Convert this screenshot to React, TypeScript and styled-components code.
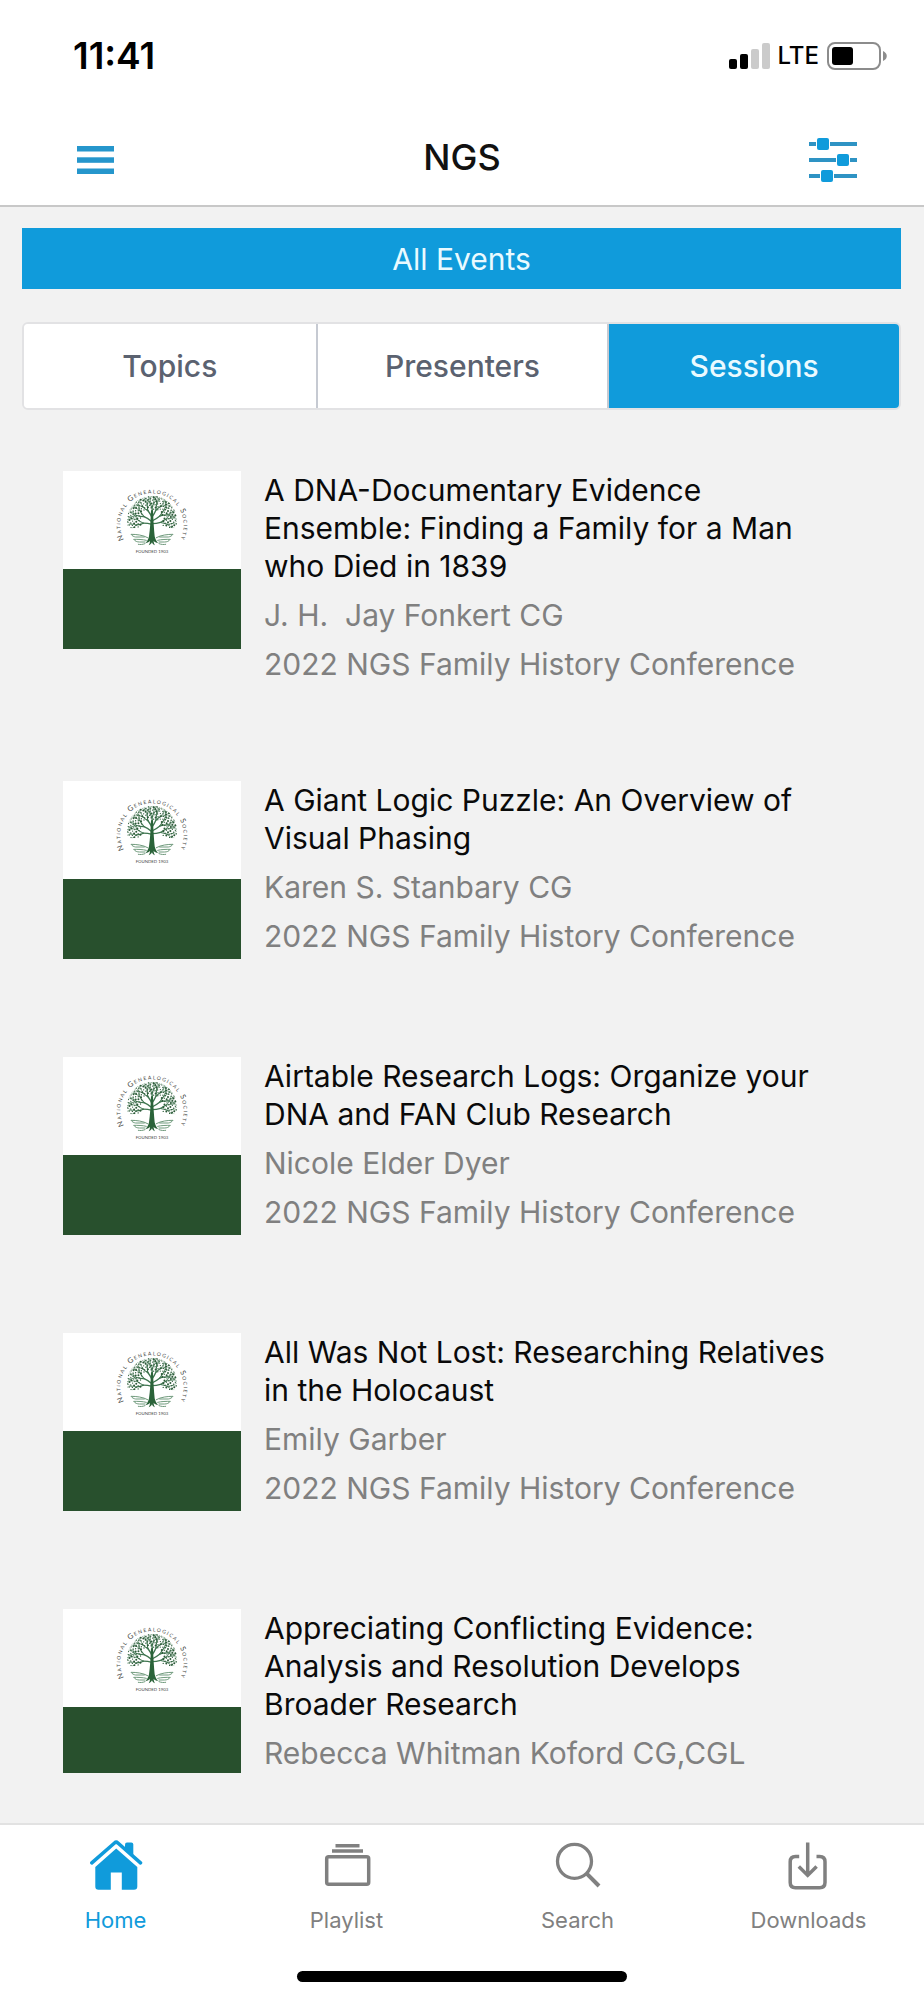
import React from 'react';
import styled, { createGlobalStyle } from 'styled-components';

const BLUE = '#109bdb';
const GREEN = '#28502d';
const GREY = '#808080';

const GlobalStyle = createGlobalStyle`
  *, *::before, *::after { box-sizing: border-box; }
  body {
    margin: 0;
    font-family: Inter, 'Liberation Sans', sans-serif;
    background: #f2f2f2;
  }
  button { font: inherit; border: 0; padding: 0; cursor: pointer; }
  h1, h2, p { margin: 0; font-weight: 400; }
`;

const Screen = styled.div`
  display: flex;
  flex-direction: column;
  height: 100vh;
  background: #f2f2f2;
`;

const Header = styled.header`
  flex: none;
  background: #fff;
  border-bottom: 2px solid #c8c8c8;
`;

const StatusBar = styled.div`
  display: flex;
  align-items: center;
  justify-content: space-between;
  height: 112px;
  padding: 0 37px 0 73px;
`;

const Clock = styled.time`
  font-size: 37px;
  font-weight: 600;
  line-height: 40px;
`;

const StatusIcons = styled.div`
  display: flex;
  align-items: center;
  gap: 8px;
`;

const Carrier = styled.span`
  font-size: 24px;
  font-weight: 500;
  line-height: 32px;
`;

const TitleBar = styled.div`
  display: grid;
  grid-template-columns: 1fr auto 1fr;
  align-items: center;
  height: 93px;
  padding: 0 67px 4px;
`;

const ScreenTitle = styled.h1`
  font-size: 36px;
  font-weight: 500;
  line-height: 40px;
  color: #111;
`;

const IconButton = styled.button<{ $end?: boolean }>`
  display: flex;
  align-items: center;
  justify-content: center;
  justify-self: ${({ $end }) => ($end ? 'end' : 'start')};
  width: ${({ $end }) => ($end ? '48px' : '56px')};
  height: 56px;
  margin-top: 6px;
  background: transparent;
  color: ${BLUE};
`;

const Filters = styled.section`
  flex: none;
  display: flex;
  flex-direction: column;
  gap: 33px;
  padding: 21px 23px 0 22px;
`;

const EventsButton = styled.button`
  height: 61px;
  background: ${BLUE};
  color: #eafaff;
  font-size: 30px;
  line-height: 38px;
`;

const Segments = styled.div`
  display: grid;
  grid-template-columns: repeat(3, 1fr);
  height: 88px;
  border: 2px solid #e2e2e4;
  border-radius: 6px;
  overflow: hidden;
`;

const Segment = styled.button<{ $active?: boolean }>`
  background: ${({ $active }) => ($active ? BLUE : '#fff')};
  color: ${({ $active }) => ($active ? '#eafaff' : '#5b6270')};
  font-size: 30px;
  font-weight: 500;
  line-height: 38px;

  & + & { border-left: 2px solid #c6cad2; }
`;

const SessionList = styled.ul`
  flex: 1;
  min-height: 0;
  display: flex;
  flex-direction: column;
  gap: 98px;
  margin: 61px 0 50px;
  padding: 0 80px 0 63px;
  list-style: none;
  overflow-y: auto;
  scrollbar-width: none;
`;

const SessionRow = styled.li`
  flex: none;
  display: flex;
  align-items: flex-start;
  gap: 23px;
`;

const Thumb = styled.div`
  flex: none;
  width: 178px;
  background: ${GREEN};
  padding-bottom: 80px;
`;

const LogoArt = styled.svg`
  display: block;
  width: 100%;
  height: 98px;
  background: #fff;
`;

const RingText = styled.text`
  font-family: Lato, sans-serif;
  font-size: 22px;
  font-variant: small-caps;
  letter-spacing: 4px;
`;

const SessionText = styled.div`
  flex: 1;
  min-width: 0;
  display: flex;
  flex-direction: column;
  gap: 11px;
  font-size: 30px;
  line-height: 38px;
`;

const SessionTitle = styled.h2`
  font-size: 30px;
  line-height: 38px;
  color: #0a0a0a;
`;

const SessionMeta = styled.p`
  color: ${GREY};
  white-space: pre-wrap;
`;

const Footer = styled.footer`
  flex: none;
  display: flex;
  flex-direction: column;
  align-items: center;
  gap: 37px;
  padding: 13px 0 18px;
  background: #fff;
  border-top: 2px solid #e2e2e2;
`;

const TabNav = styled.nav`
  display: grid;
  grid-template-columns: repeat(4, 1fr);
  width: 100%;
`;

const TabLink = styled.a<{ $active?: boolean }>`
  display: flex;
  flex-direction: column;
  align-items: center;
  gap: 14px;
  color: ${({ $active }) => ($active ? BLUE : GREY)};
  font-size: 22px;
  line-height: 28px;
  text-decoration: none;
`;

const HomeIndicator = styled.div`
  width: 330px;
  height: 11px;
  border-radius: 6px;
  background: #000;
`;

type Point = [number, number];
type Twig = { d: string; w: number };

const TREE_X = 267;

const growBranch = (x: number, y: number, angle: number, length: number, depth: number, out: Twig[]) => {
  const bend = depth % 2 ? 0.14 : -0.14;
  const nx = x + Math.cos(angle) * length;
  const ny = y + Math.sin(angle) * length;
  const mx = x + Math.cos(angle + bend) * length * 0.5;
  const my = y + Math.sin(angle + bend) * length * 0.5;
  out.push({
    d: `M${x.toFixed(1)} ${y.toFixed(1)}Q${mx.toFixed(1)} ${my.toFixed(1)} ${nx.toFixed(1)} ${ny.toFixed(1)}`,
    w: depth * 0.9 + 1.4,
  });
  if (depth === 0) return;
  growBranch(nx, ny, angle - 0.4, length * 0.8, depth - 1, out);
  growBranch(nx, ny, angle + 0.4, length * 0.8, depth - 1, out);
};

const twigs: Twig[] = [];
[
  { y: 160, a: -172, l: 26 },
  { y: 158, a: -8, l: 26 },
  { y: 152, a: -148, l: 28 },
  { y: 150, a: -32, l: 28 },
  { y: 140, a: -120, l: 24 },
  { y: 138, a: -60, l: 24 },
  { y: 128, a: -90, l: 18 },
].forEach(({ y, a, l }) => growBranch(TREE_X, y, (a * Math.PI) / 180, l, 3, twigs));

/* Leaves follow a sunflower spiral, kept to the outer part of the crown. */
const leaves: Point[] = Array.from({ length: 260 }, (_, i): Point => {
  const r = 74 * Math.sqrt((i + 0.5) / 260);
  const a = i * 2.39996;
  return [TREE_X + Math.cos(a) * r, 149 + Math.sin(a) * r];
}).filter(([x, y]) => y < 170 && Math.hypot(x - TREE_X, y - 149) > 34);

const NgsLogo = () => (
  <LogoArt viewBox="0 0 534 294" role="img" aria-label="National Genealogical Society, founded 1903">
    <defs>
      <path id="ring" d="M200 229 A95 95 0 1 1 334 229" />
      <clipPath id="crown">
        <path d="M192 172V149A75 75 0 0 1 342 149V172Z" />
      </clipPath>
    </defs>
    <g clipPath="url(#crown)">
      <g fill="none" stroke="#3f7650" strokeLinecap="round">
        {twigs.map((t, i) => (
          <path key={i} d={t.d} strokeWidth={t.w} />
        ))}
      </g>
      <g fill="#2c5a38">
        {leaves.map(([x, y], i) => (
          <circle key={i} cx={x} cy={y} r={i % 3 ? 2 : 3} />
        ))}
      </g>
    </g>
    <path
      fill="#2a6339"
      d="M264 118h6c1 30 3 58 5 78 2 9 5 14 10 20-6-1-10-3-13-7 0 5 1 9 4 14-5-2-8-5-9-9-2 4-5 7-10 9 3-5 4-9 4-14-3 4-7 6-13 7 5-6 8-11 10-20 3-20 5-48 6-78z"
    />
    <g fill="none" stroke="#6f9a7c" strokeWidth="3" strokeLinecap="round">
      <path d="M254 200c-14-8-34-10-50-10 4 5 8 7 14 8h26M250 208c-12-3-26-3-38-3 5 6 10 8 18 8h16M246 218c-8 3-14 3-20 2" />
      <path d="M280 200c14-8 34-10 50-10-4 5-8 7-14 8h-26M284 208c12-3 26-3 38-3-5 6-10 8-18 8h-16M288 218c8 3 14 3 20 2" />
    </g>
    <RingText fill="#3f4642">
      <textPath href="#ring" startOffset="50%" textAnchor="middle">
        National Genealogical Society
      </textPath>
    </RingText>
    <text x="267" y="247" fill="#3f4642" fontFamily="Lato, sans-serif" fontSize="13" textAnchor="middle">
      FOUNDED 1903
    </text>
  </LogoArt>
);

const SignalIcon = () => (
  <svg width="41" height="26" viewBox="0 0 41 26" aria-label="Signal: two of four bars" role="img">
    <rect x="0" y="16" width="8" height="10" rx="2" />
    <rect x="11" y="11" width="8" height="15" rx="2" />
    <rect x="22" y="6" width="8" height="20" rx="2" fill="#cbcbcb" />
    <rect x="33" y="0" width="8" height="26" rx="2" fill="#cbcbcb" />
  </svg>
);

const BatteryIcon = () => (
  <svg width="60" height="28" viewBox="0 0 60 28" aria-label="Battery" role="img">
    <rect x="1" y="1" width="52" height="26" rx="7" fill="none" stroke="#8c8c8c" strokeWidth="2" />
    <rect x="5" y="5" width="21" height="18" rx="3" />
    <path d="M56 9c5 2 5 8 0 10z" fill="#8c8c8c" />
  </svg>
);

const MenuIcon = () => (
  <svg width="37" height="28" viewBox="0 0 37 28" fill="#2596cc">
    <rect y="0" width="37" height="5.5" />
    <rect y="11.3" width="37" height="5.5" />
    <rect y="22.5" width="37" height="5.5" />
  </svg>
);

const SlidersIcon = () => (
  <svg width="48" height="46" viewBox="0 0 48 46">
    <path d="M0 7h7M21 7h27M0 23h27M41 23h7M0 39h11M25 39h23" stroke="#2e93c4" strokeWidth="4" />
    <g fill={BLUE}>
      <rect x="8" y="1" width="12" height="12" rx="2" />
      <rect x="28" y="17" width="12" height="12" rx="2" />
      <rect x="12" y="33" width="12" height="12" rx="2" />
    </g>
  </svg>
);

const HomeIcon = () => (
  <svg width="54" height="54" viewBox="0 0 54 54" fill="currentColor">
    <path d="M36 6.500Q36 4.500 38 4.500H42.300Q44.300 4.500 44.300 6.500V20L36 12.500Z" />
    <path d="M27.200 10.500 48.300 29V48.500Q48.300 51.700 45 51.700H32.800V34.500H21.800V51.700H9.500Q6.300 51.700 6.300 48.500V29Z" />
    <path d="M3 28.200 25.700 8.500Q27.200 7.200 28.700 8.500L51.300 28.200" fill="none" stroke="#fff" strokeWidth="2.500" />
    <path d="M2.800 24.900 25.500 5Q27.200 3.500 28.900 5L51.500 24.900" fill="none" stroke="currentColor" strokeWidth="3.600" strokeLinecap="round" />
  </svg>
);

const PlaylistIcon = () => (
  <svg width="54" height="54" viewBox="0 0 54 54" fill="none" stroke="currentColor" strokeWidth="3.500">
    <path d="M15.500 7.800h24M12 13h31" />
    <rect x="6.700" y="18.700" width="42" height="27.500" rx="2" />
  </svg>
);

const SearchIcon = () => (
  <svg width="54" height="54" viewBox="0 0 54 54" fill="none" stroke="currentColor" strokeWidth="3.300">
    <circle cx="23.500" cy="23.300" r="17" />
    <path d="M35.500 35.300 48 48" strokeWidth="4" />
  </svg>
);

const DownloadIcon = () => (
  <svg width="54" height="54" viewBox="0 0 54 54" fill="none" stroke="currentColor" strokeWidth="3.500">
    <path d="M17.200 18.500H13.500Q8.200 18.500 8.200 23.800V44.500Q8.200 49.700 13.500 49.700H37.700Q43 49.700 43 44.500V23.800Q43 18.500 37.700 18.500H34.500" />
    <path d="M25.700 4.500V37.500M16.800 28.500 25.700 37.400 34.600 28.500" />
  </svg>
);

const CONFERENCE = '2022 NGS Family History Conference';

const sessions = [
  { title: 'A DNA-Documentary Evidence Ensemble: Finding a Family for a Man who Died in 1839', presenter: 'J. H.  Jay Fonkert CG', conference: CONFERENCE },
  { title: 'A Giant Logic Puzzle: An Overview of Visual Phasing', presenter: 'Karen S. Stanbary CG', conference: CONFERENCE },
  { title: 'Airtable Research Logs: Organize your DNA and FAN Club Research', presenter: 'Nicole Elder Dyer', conference: CONFERENCE },
  { title: 'All Was Not Lost: Researching Relatives in the Holocaust', presenter: 'Emily Garber', conference: CONFERENCE },
  { title: 'Appreciating Conflicting Evidence: Analysis and Resolution Develops Broader Research', presenter: 'Rebecca Whitman Koford CG,CGL' },
];

const tabs = [
  { label: 'Home', Icon: HomeIcon, active: true },
  { label: 'Playlist', Icon: PlaylistIcon },
  { label: 'Search', Icon: SearchIcon },
  { label: 'Downloads', Icon: DownloadIcon },
];

export default function App() {
  return (
    <Screen>
      <GlobalStyle />
      <Header>
        <StatusBar>
          <Clock>11:41</Clock>
          <StatusIcons>
            <SignalIcon />
            <Carrier>LTE</Carrier>
            <BatteryIcon />
          </StatusIcons>
        </StatusBar>
        <TitleBar>
          <IconButton aria-label="Menu">
            <MenuIcon />
          </IconButton>
          <ScreenTitle>NGS</ScreenTitle>
          <IconButton $end aria-label="Filter">
            <SlidersIcon />
          </IconButton>
        </TitleBar>
      </Header>

      <Filters>
        <EventsButton>All Events</EventsButton>
        <Segments>
          <Segment>Topics</Segment>
          <Segment>Presenters</Segment>
          <Segment $active aria-pressed>
            Sessions
          </Segment>
        </Segments>
      </Filters>

      <SessionList>
        {sessions.map((s) => (
          <SessionRow key={s.title}>
            <Thumb>
              <NgsLogo />
            </Thumb>
            <SessionText>
              <SessionTitle>{s.title}</SessionTitle>
              <SessionMeta>{s.presenter}</SessionMeta>
              {s.conference && <SessionMeta>{s.conference}</SessionMeta>}
            </SessionText>
          </SessionRow>
        ))}
      </SessionList>

      <Footer>
        <TabNav>
          {tabs.map(({ label, Icon, active }) => (
            <TabLink key={label} href={`#${label.toLowerCase()}`} $active={active}>
              <Icon />
              {label}
            </TabLink>
          ))}
        </TabNav>
        <HomeIndicator />
      </Footer>
    </Screen>
  );
}
